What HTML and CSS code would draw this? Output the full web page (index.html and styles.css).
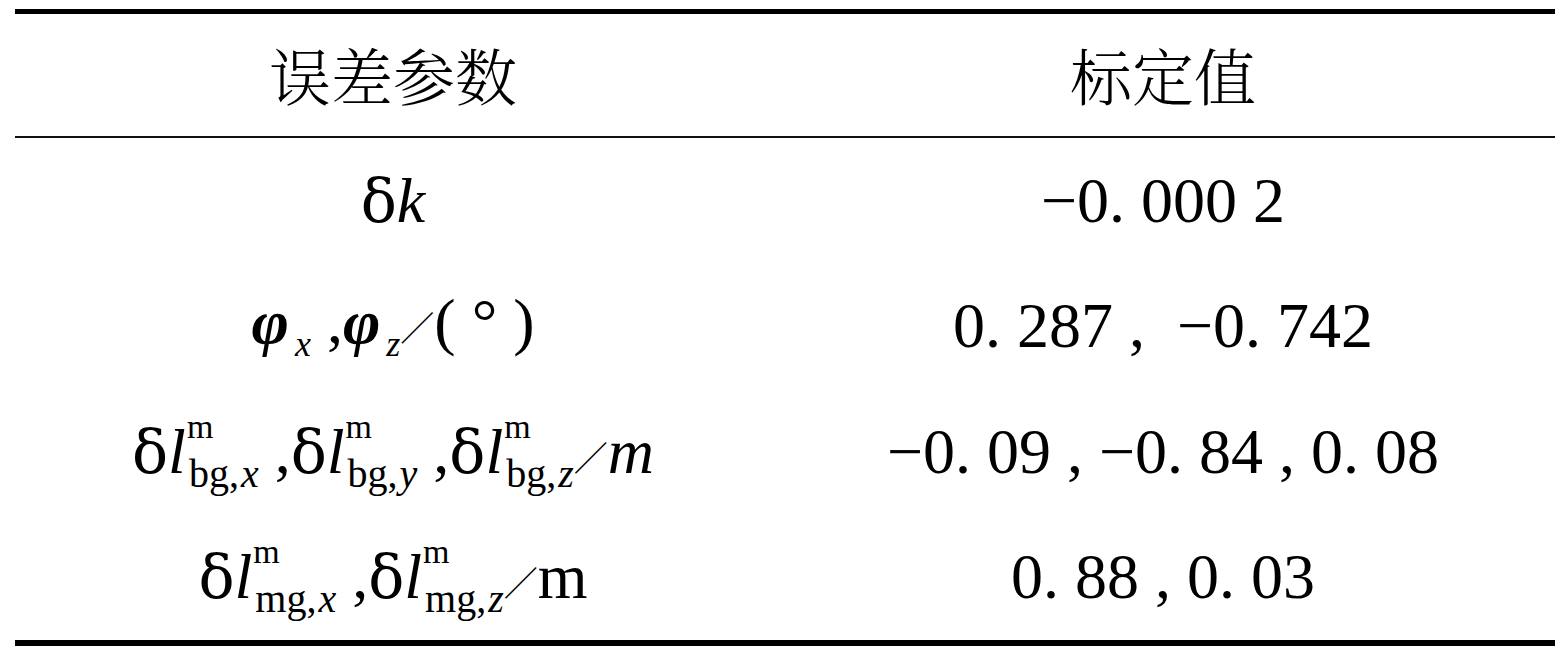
FILE: index.html
```html
<!DOCTYPE html>
<html lang="zh-CN">
<head>
<meta charset="utf-8">
<title>误差参数标定值</title>
<link rel="stylesheet" href="styles.css">
</head>
<body>
<div class="tbl">
  <div class="hd">
    <div class="cell zh">误差参数</div>
    <div class="cell zh">标定值</div>
  </div>
  <div class="row">
    <div class="cell m"><span class="ex"><span class="d">δ</span><i>k</i></span></div>
    <div class="cell n"><span class="ex">−0. 000 2</span></div>
  </div>
  <div class="row">
    <div class="cell m"><span class="ex"><b class="phi">φ</b><i class="sb1">x</i> ,<b class="phi">φ</b><i class="sb1">z</i><span class="sl">／</span>( <span class="deg">°</span> )</span></div>
    <div class="cell n"><span class="ex">0. 287 ,  −0. 742</span></div>
  </div>
  <div class="row">
    <div class="cell m"><span class="ex"><span class="d">δ</span><i class="l">l</i><span class="sc"><span class="sp">m</span><span class="sb">bg,<i>x</i></span></span> ,<span class="d">δ</span><i class="l">l</i><span class="sc"><span class="sp">m</span><span class="sb">bg,<i>y</i></span></span> ,<span class="d">δ</span><i class="l">l</i><span class="sc"><span class="sp">m</span><span class="sb">bg,<i>z</i></span></span><span class="sl">／</span><i>m</i></span></div>
    <div class="cell n"><span class="ex">−0. 09 , −0. 84 , 0. 08</span></div>
  </div>
  <div class="row">
    <div class="cell m"><span class="ex"><span class="d">δ</span><i class="l">l</i><span class="sc"><span class="sp">m</span><span class="sb">mg,<i>x</i></span></span> ,<span class="d">δ</span><i class="l">l</i><span class="sc"><span class="sp">m</span><span class="sb">mg,<i>z</i></span></span><span class="sl">／</span>m</span></div>
    <div class="cell n"><span class="ex">0. 88 , 0. 03</span></div>
  </div>
</div>
</body>
</html>
```

FILE: styles.css
```css
html, body {
  margin: 0;
  padding: 0;
  background: #fff;
}

body {
  font-family: "Liberation Serif", "Noto Sans CJK SC", serif;
  color: #000;
}

.tbl {
  margin: 9px 0 0 15px;
  width: 1540px;
  border-top: 5px solid #000;
  border-bottom: 6px solid #000;
}

.hd,
.row {
  display: grid;
  grid-template-columns: 756px 1fr;
}

.hd {
  height: 122px;
  border-bottom: 2px solid #111;
}

.row {
  height: 125.5px;
}

.cell {
  display: flex;
  align-items: center;
  justify-content: center;
  white-space: pre;
  line-height: 1;
}

.ex {
  display: block;
  white-space: pre;
}

.zh {
  font-family: "Noto Serif CJK SC", "Noto Sans CJK SC", serif;
  font-size: 62px;
  font-weight: 300;
}

.n {
  font-family: "Liberation Serif", serif;
  font-size: 64px;
}

.m {
  font-family: "Liberation Serif", serif;
  font-size: 64px;
}

.d {
  font-family: "DejaVu Serif", "Liberation Serif", serif;
  font-style: normal;
  font-size: 60px;
}

.phi {
  font-style: italic;
  font-weight: 700;
}

.sb1 {
  font-size: 36px;
  vertical-align: -13px;
  margin-left: 6px;
}

.sl {
  font-family: "Noto Sans CJK SC", sans-serif;
  font-size: 34px;
  font-weight: 400;
  vertical-align: 2px;
}

.deg {
  font-size: 64px;
}

.sc {
  display: inline-flex;
  flex-direction: column;
  align-items: flex-start;
  vertical-align: 35px;
  line-height: 1;
  margin-left: 1px;
}

.sp {
  font-size: 34px;
}

.sb {
  font-size: 40px;
  margin-top: 10px;
  margin-left: 2px;
}

.sb i {
  margin-left: 2px;
}
```
